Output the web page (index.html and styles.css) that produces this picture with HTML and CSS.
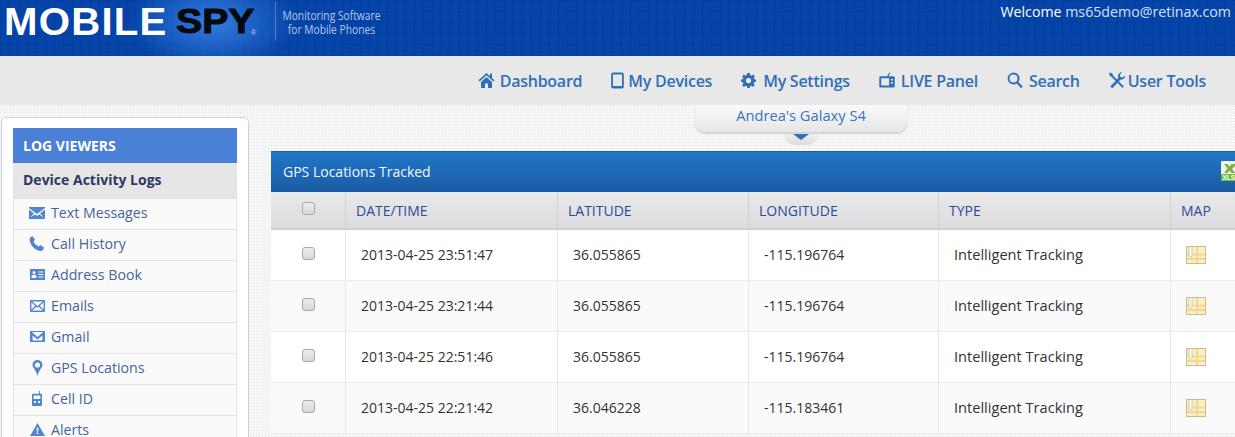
FILE: index.html
```html
<!DOCTYPE html>
<html lang="en">
<head>
<meta charset="utf-8">
<title>Mobile Spy</title>
<link rel="stylesheet" href="styles.css">
</head>
<body>
<header class="topbar">
  <div class="logo">
    <span class="logo-mobile">MOBILE</span>
    <span class="logo-spy">SPY</span>
    <span class="logo-reg">®</span>
    <div class="logo-tag"><span class="logo-tag-text">Monitoring Software<br>for Mobile Phones</span></div>
  </div>
  <div class="welcome">Welcome <span class="welcome-mail">ms65demo@retinax.com</span></div>
</header>

<nav class="nav">
  <a class="nav-item gap-5"><svg class="nav-icon" width="17" height="17" viewBox="0 0 17 17"><path d="M8.5 1 0.5 8.2 1.6 9.4 8.5 3.2 15.4 9.4 16.5 8.2 14 6V1.5H12V4.2Z"/><path d="M3 10 8.5 5 14 10V16H10V11.5H7V16H3Z"/></svg>Dashboard</a>
  <a class="nav-item gap-4"><svg class="nav-icon" width="13" height="17" viewBox="0 0 13 17"><path fill-rule="evenodd" d="M2 .5H11A1.8 1.8 0 0 1 12.8 2.3V14.7A1.8 1.8 0 0 1 11 16.5H2A1.8 1.8 0 0 1 .2 14.7V2.3A1.8 1.8 0 0 1 2 .5ZM2 2.4V14H11V2.4Z"/></svg>My Devices</a>
  <a class="nav-item gap-7"><svg class="nav-icon" width="15" height="15" viewBox="0 0 16 16"><path fill-rule="evenodd" d="M6.6 0H9.4L9.8 2.2 11.2 2.8 13 1.5 14.9 3.4 13.6 5.2 14.2 6.6 16 7V9.4L14.1 9.8 13.5 11.2 14.6 13 12.8 14.8 11 13.6 9.7 14.1 9.4 16H6.6L6.2 14.1 4.9 13.6 3.1 14.8 1.2 13 2.5 11.2 1.9 9.8 0 9.4V7L1.9 6.6 2.5 5.2 1.2 3.4 3.1 1.5 4.9 2.8 6.2 2.2ZM8 5.2A2.8 2.8 0 1 0 8 10.8 2.8 2.8 0 1 0 8 5.2Z"/></svg>My Settings</a>
  <a class="nav-item gap-6"><svg class="nav-icon" width="16" height="17" viewBox="0 0 17 17"><path fill-rule="evenodd" d="M1.5 4H8.6L11 0 12 .6 10.1 4H15.5A1.2 1.2 0 0 1 16.7 5.2V14.8A1.2 1.2 0 0 1 15.5 16H1.5A1.2 1.2 0 0 1 .3 14.8V5.2A1.2 1.2 0 0 1 1.5 4ZM2.4 6.2V13.8H10.8V6.2ZM12.6 7V8.6H14.8V7ZM12.6 10V11.6H14.8V10Z"/></svg>LIVE Panel</a>
  <a class="nav-item gap-6"><svg class="nav-icon" width="16" height="17" viewBox="0 0 16 17"><path fill-rule="evenodd" d="M6.5.5A6 6 0 0 1 11.4 10L15.8 14.6 14.2 16.2 9.8 11.6A6 6 0 1 1 6.5.5ZM6.5 2.5A4 4 0 1 0 6.5 10.5 4 4 0 1 0 6.5 2.5Z"/></svg>Search</a>
  <a class="nav-item gap-2"><svg class="nav-icon" width="17" height="17" viewBox="0 0 17 17"><path d="M1 .5 3.4 1.6 4 3.4 14.8 14.6 13.6 16 2.6 5 .6 3.6 0 1.6Z"/><path d="M11.4.4A4 4 0 0 1 13 .5L10.8 2.8 11.4 5 13.8 5.6 16.2 3.4A4 4 0 0 1 11.6 7.6L3.4 16.2 1.2 14.6 9.4 6A4 4 0 0 1 11.4.4Z"/></svg>User Tools</a>
</nav>

<main class="page">
  <aside class="side-card">
    <h2 class="side-title">LOG VIEWERS</h2>
    <h3 class="side-group">Device Activity Logs</h3>
    <ul class="side-list">
      <li class="side-row"><svg class="side-icon" width="16" height="12" viewBox="0 0 16 12"><path d="M0 1 8 7 16 1V0H0Z"/><path d="M0 2.5V12H16V2.5L11 6.6 15 10.5 10 7.4 8 8.8 6 7.4 1 10.5 5 6.6Z"/></svg>Text Messages</li>
      <li class="side-row"><svg class="side-icon" width="16" height="15" viewBox="0 0 16 15"><path d="M3.6.2 6 3.8 4.6 5.6C5.4 7.6 7.4 9.6 9.6 10.6L11.4 9 15 11.4C15 13 13.4 15 11.6 15 6 14.6 .6 8.6.6 3.2.6 1.8 2.2.4 3.6.2Z"/></svg>Call History</li>
      <li class="side-row"><svg class="side-icon" width="15" height="11" viewBox="0 0 15 11"><path fill-rule="evenodd" d="M0 0H15V11H0ZM4 2A1.5 1.5 0 1 0 4 5 1.5 1.5 0 1 0 4 2ZM1.5 9H6.5V7L5 5.8H3L1.5 7ZM8.4 2.4V3.6H13.4V2.4ZM8.4 4.9V6.1H13.4V4.9ZM8.4 7.4V8.6H13.4V7.4Z"/></svg>Address Book</li>
      <li class="side-row"><svg class="side-icon" width="15" height="12" viewBox="0 0 15 12"><path fill-rule="evenodd" d="M1 0H14A1 1 0 0 1 15 1V11A1 1 0 0 1 14 12H1A1 1 0 0 1 0 11V1A1 1 0 0 1 1 0ZM2.2 1.4 7.5 6 12.8 1.4ZM1.4 2.4V9.4L5.3 5.8ZM13.6 2.4 9.7 5.8 13.6 9.4ZM6.2 6.7 2.2 10.6H12.8L8.8 6.7 7.5 7.8Z"/></svg>Emails</li>
      <li class="side-row"><svg class="side-icon" width="15" height="11" viewBox="0 0 15 11"><path fill-rule="evenodd" d="M0 0H15V11H0ZM1.8 1 7.5 6 13.2 1ZM2.6 4.6V9.6H12.4V4.6L7.5 8.4Z"/></svg>Gmail</li>
      <li class="side-row"><svg class="side-icon" width="11" height="16" viewBox="0 0 11 16"><path fill-rule="evenodd" d="M5.5 0A5 5 0 0 1 10.5 5C10.5 7.6 7 9.6 5.5 16 4 9.6.5 7.6.5 5A5 5 0 0 1 5.5 0ZM5.5 2.4A2.6 2.6 0 1 0 5.5 7.6 2.6 2.6 0 1 0 5.5 2.4Z"/></svg>GPS Locations</li>
      <li class="side-row"><svg class="side-icon" width="10" height="15" viewBox="0 0 10 15"><path fill-rule="evenodd" d="M7 0H8V2.8H9A1 1 0 0 1 10 3.8V14A1 1 0 0 1 9 15H1A1 1 0 0 1 0 14V3.8A1 1 0 0 1 1 2.8H7ZM1.6 4.4V8H8.4V4.4ZM2 10V12H4V10ZM6 10V12H8V10Z"/></svg>Cell ID</li>
      <li class="side-row"><svg class="side-icon" width="15" height="13" viewBox="0 0 15 13"><path fill-rule="evenodd" d="M7.5 0 15 13H0ZM6.7 4.4V8.6H8.3V4.4ZM6.7 9.6V11H8.3V9.6Z"/></svg>Alerts</li>
    </ul>
  </aside>

  <section class="content">
    <div class="device-tab">
      <div class="device-name">Andrea's Galaxy S4</div>
      <div class="device-bump"><span class="device-caret"></span></div>
    </div>
    <div class="panel">
      <div class="panel-head">
        <span>GPS Locations Tracked</span>
        <svg class="xls" width="14" height="20" viewBox="0 0 14 20"><rect width="22" height="20" rx="1" fill="#f1f4ec"/><path d="M3 3H6.5L8.5 5.5 10.5 3H14V5L11 8 14 11.5V12H10.5L8.5 9.5 6.5 12H3L6.5 7.5Z" fill="#7cb342"/><rect y="13" width="22" height="7" fill="#6cbf3c"/><text x="1.5" y="19" class="xls-text">XLS</text></svg>
      </div>
      <div class="grid-row grid-head">
        <div class="cell cell-check"><input type="checkbox" class="check"></div>
        <div class="cell">DATE/TIME</div>
        <div class="cell">LATITUDE</div>
        <div class="cell">LONGITUDE</div>
        <div class="cell">TYPE</div>
        <div class="cell">MAP</div>
      </div>
      <div class="grid-row">
        <div class="cell cell-check"><input type="checkbox" class="check"></div>
        <div class="cell cell-body">2013-04-25 23:51:47</div>
        <div class="cell cell-body">36.055865</div>
        <div class="cell cell-body">-115.196764</div>
        <div class="cell cell-body cell-type">Intelligent Tracking</div>
        <div class="cell cell-map"><svg width="20" height="18" viewBox="0 0 20 18"><use href="#map"/></svg></div>
      </div>
      <div class="grid-row grid-alt">
        <div class="cell cell-check"><input type="checkbox" class="check"></div>
        <div class="cell cell-body">2013-04-25 23:21:44</div>
        <div class="cell cell-body">36.055865</div>
        <div class="cell cell-body">-115.196764</div>
        <div class="cell cell-body cell-type">Intelligent Tracking</div>
        <div class="cell cell-map"><svg width="20" height="18" viewBox="0 0 20 18"><use href="#map"/></svg></div>
      </div>
      <div class="grid-row">
        <div class="cell cell-check"><input type="checkbox" class="check"></div>
        <div class="cell cell-body">2013-04-25 22:51:46</div>
        <div class="cell cell-body">36.055865</div>
        <div class="cell cell-body">-115.196764</div>
        <div class="cell cell-body cell-type">Intelligent Tracking</div>
        <div class="cell cell-map"><svg width="20" height="18" viewBox="0 0 20 18"><use href="#map"/></svg></div>
      </div>
      <div class="grid-row grid-alt">
        <div class="cell cell-check"><input type="checkbox" class="check"></div>
        <div class="cell cell-body">2013-04-25 22:21:42</div>
        <div class="cell cell-body">36.046228</div>
        <div class="cell cell-body">-115.183461</div>
        <div class="cell cell-body cell-type">Intelligent Tracking</div>
        <div class="cell cell-map"><svg width="20" height="18" viewBox="0 0 20 18"><use href="#map"/></svg></div>
      </div>
    </div>
  </section>
</main>

<svg class="defs" width="0" height="0">
  <symbol id="map" viewBox="0 0 20 18">
    <rect x=".5" y=".5" width="19" height="17" fill="#fbf0bd" stroke="#c5bd94"/>
    <path d="M1 8.5H19M11 1V17M1 13H19" stroke="#efd79c" stroke-width="2"/>
    <path d="M3 1V9.5A1.5 1.5 0 0 0 6 9.5V1" fill="#fff" stroke="#cfc7a3"/>
  </symbol>
</svg>
</body>
</html>
```

FILE: styles.css
```css
* { box-sizing: border-box; }
html, body { margin: 0; height: 437px; overflow: hidden; }
body {
  width: 1235px;
  font-family: "Open Sans", sans-serif;
  background-color: #f6f6f6;
  background-image: radial-gradient(#e6e6e6 .7px, transparent .8px);
  background-size: 3px 3px;
  color: #333;
}

.topbar {
  height: 56px;
  display: flex;
  justify-content: space-between;
  background-color: #0544a8;
  background-image:
    radial-gradient(ellipse 85px 50px at 213px 22px, rgba(60, 135, 235, .85), transparent),
    repeating-linear-gradient(90deg, rgba(0, 25, 100, .16) 0 1px, transparent 1px 9px),
    repeating-linear-gradient(0deg, rgba(0, 25, 100, .12) 0 1px, transparent 1px 11px);
  overflow: hidden;
}
.logo { display: flex; align-items: flex-start; height: 56px; padding-left: 4px; }
.logo-mobile {
  font: 700 39px/1 "Liberation Sans", sans-serif;
  color: #fff;
  margin-top: 2px;
  letter-spacing: 1.2px;
  width: 172px;
  transform: scaleX(1.03);
  transform-origin: left;
}
.logo-spy {
  font: 700 35px/1 "Liberation Sans", sans-serif;
  color: #07090e;
  -webkit-text-stroke: 1px #07090e;
  margin-top: 3px;
  width: 72px;
  transform: scaleX(1.12);
  transform-origin: left;
}
.logo-reg { font: 400 7px/1 "Liberation Sans", sans-serif; color: #c5d5ee; margin: 29px 0 0 3px; width: 24px; }
.logo-tag {
  display: flex;
  justify-content: center;
  border-left: 1px solid #4f7cc4;
  height: 38px;
  margin-top: 2px;
  padding-top: 6px;
  width: 111px;
}
.logo-tag-text {
  flex: none;
  font: 400 13.5px/14px "Open Sans", sans-serif;
  color: #b4c8e8;
  text-align: center;
  white-space: nowrap;
  transform: scaleX(.76);
}
.welcome { color: #fff; font-size: 14.2px; font-weight: 500; line-height: 19px; padding: 2px 4px 0 0; }
.welcome-mail { font-weight: 400; color: #d5e2f5; }

.nav {
  height: 49px;
  background: #e8e8e8;
  display: flex;
  justify-content: flex-end;
  align-items: center;
  gap: 29px;
  padding: 0 29px 0 0;
}
.nav-item {
  display: flex;
  align-items: center;
  font-size: 16px;
  letter-spacing: -.25px;
  font-weight: 600;
  color: #2f6fb8;
  white-space: nowrap;
}
.gap-2 { gap: 2px; }
.gap-4 { gap: 4px; }
.gap-5 { gap: 5px; }
.gap-6 { gap: 6px; }
.gap-7 { gap: 7px; }
.nav-icon { fill: #2f6fb8; flex: none; }

.page { display: flex; align-items: flex-start; padding: 12px 0 0 1px; gap: 22px; }

.side-card {
  flex: none;
  width: 248px;
  background: #fff;
  border: 1px solid #cfcfcf;
  border-radius: 5px;
  padding: 10px 11px 0;
  height: 330px;
}
.side-title {
  margin: 0;
  height: 35px;
  background: #4a80d6;
  color: #fff;
  font-size: 14px;
  font-weight: 700;
  line-height: 35px;
  padding-left: 10px;
}
.side-group {
  margin: 0;
  height: 35px;
  background: #e6e6e6;
  color: #2b3a5e;
  font-size: 14px;
  font-weight: 700;
  line-height: 33px;
  padding-left: 10px;
}
.side-list { list-style: none; margin: 0; padding: 0; border: solid #e4e4e4; border-width: 0 1px; background: #fafafa; }
.side-row {
  height: 31px;
  display: grid;
  grid-template-columns: 37px 1fr;
  align-items: center;
  justify-items: start;
  border-top: 1px solid #e4e4e4;
  color: #44659c;
  font-size: 14.2px;
  padding-bottom: 3px;
}
.side-icon { fill: #4f86cf; justify-self: center; margin-left: 9px; }

.content { flex: none; width: 1000px; margin-top: -12px; }
.device-tab { margin-left: 424px; width: 212px; height: 46px; display: flex; flex-direction: column; align-items: center; }
.device-name {
  width: 212px;
  height: 27px;
  background: linear-gradient(#fafafa, #e6e6e6);
  border-radius: 0 0 11px 11px;
  box-shadow: 0 2px 2px rgba(0, 0, 0, .14);
  color: #3a72c0;
  font-size: 14.7px;
  line-height: 20px;
  text-align: center;
  position: relative;
  z-index: 1;
}
.device-bump {
  width: 36px;
  height: 13px;
  background: linear-gradient(#f4f4f4, #dcdcdc);
  border-radius: 0 0 18px 18px;
  display: flex;
  justify-content: center;
  padding-top: 3px;
}
.device-caret {
  width: 0; height: 0;
  border-left: 8px solid transparent;
  border-right: 8px solid transparent;
  border-top: 6px solid #2f6fb8;
  position: relative;
  z-index: 2;
  margin-top: -1px;
}

.panel { width: 1000px; }
.panel-head {
  height: 41px;
  background: linear-gradient(#1f77c8, #1b5ba4);
  border-top: 1px solid #16609f;
  color: #f2f6fb;
  font-size: 14px;
  line-height: 40px;
  padding-left: 12px;
  position: relative;
}
.xls { position: absolute; left: 950px; top: 9px; }
.xls-text { font: 700 6.5px "Liberation Sans", sans-serif; fill: #fff; }

.grid-row {
  display: grid;
  grid-template-columns: 75px 212px 191px 190px 232px 1fr;
  height: 51px;
  background: #fff;
  border-bottom: 1px solid #ececec;
  font-size: 14px;
  color: #333;
}
.grid-head {
  height: 38px;
  background: linear-gradient(#e9e9e9, #dcdce0);
  border-bottom: 2px solid #cfcfcf;
  color: #2c4a9a;
  font-size: 14px;
}
.grid-alt { background: #fafafa; }
.cell { border-right: 1px solid #e6e6e6; padding-left: 10px; display: flex; align-items: center; white-space: nowrap; }
.grid-head .cell { border-right-color: #d2d2d2; padding-top: 1px; }
.grid-head .cell-check { padding: 0 0 3px; }
.cell-check { padding: 0 0 4px; justify-content: center; }
.cell-body { padding: 0 0 2px 15px; }
.cell-type { font-size: 14.6px; }
.cell-map { padding: 0 0 1px 15px; }
.check {
  appearance: none;
  width: 13px;
  height: 13px;
  margin: 0;
  background: linear-gradient(#ececec, #d8d8d8);
  border: 1px solid #a8a8a8;
  border-radius: 3px;
}
.defs { position: absolute; }
```
